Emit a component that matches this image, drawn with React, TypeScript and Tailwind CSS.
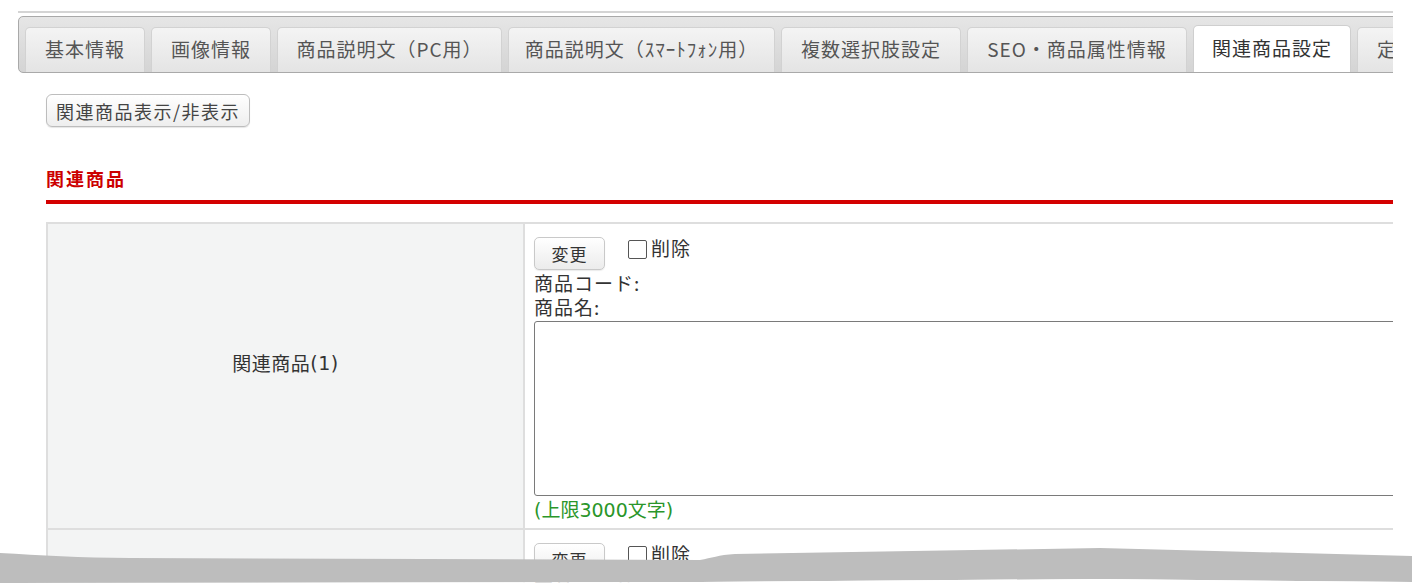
import React from "react";

const tabs: { label: string; w: string; active?: boolean }[] = [
  { label: "基本情報", w: "w-[120px]" },
  { label: "画像情報", w: "w-[120px]" },
  { label: "商品説明文（PC用）", w: "w-[225px]" },
  { label: "商品説明文（ｽﾏｰﾄﾌｫﾝ用）", w: "w-[267px]" },
  { label: "複数選択肢設定", w: "w-[180px]" },
  { label: "SEO・商品属性情報", w: "w-[220px]" },
  { label: "関連商品設定", w: "w-[158px]", active: true },
  { label: "定期購入設定", w: "w-[160px]" },
];

function Row({ n }: { n: number }) {
  return (
    <div className="flex border-b-2 border-[#dedede]">
      <div className="w-[477px] shrink-0 bg-[#f3f4f4] border-r-2 border-[#dedede] flex items-center justify-center pb-[26px] text-[19px] text-[#333] leading-[24px] font-['DejaVu_Sans','Noto_Sans_CJK_JP',sans-serif] tracking-[0.5px]">
        <span className="font-['Noto_Sans_CJK_JP',sans-serif] tracking-[0.5px]">関連商品</span>({n})
      </div>
      <div className="flex-1 pl-[9px] pt-[13px] pb-[6px]">
        <div className="flex items-start">
          <button className="w-[71px] h-[33px] rounded-[5px] border border-[#c9c9c9] bg-linear-to-b from-[#ffffff] to-[#ececec] text-[17px] text-[#333] leading-none tracking-[1px] shadow-[0_1px_1px_rgba(0,0,0,0.08)]">
            変更
          </button>
          <div className="ml-[23px] flex items-center h-[22px]">
            <span className="w-[19px] h-[19px] border border-[#555] rounded-[2px] bg-white mt-[2px]" />
            <span className="ml-[4px] text-[19px] text-[#333] leading-[24px] tracking-[1px]">削除</span>
          </div>
        </div>
        <div className="text-[19px] text-[#333] leading-[24px] mt-[1px] tracking-[1px]">商品コード:</div>
        <div className="text-[19px] text-[#333] leading-[24px] tracking-[1px]">商品名:</div>
        <div className="mt-[2px] w-[1000px] h-[175px] border border-[#7a7a7a] rounded-[3px] bg-white" />
        <div className="mt-[1px] text-[19px] text-[#2a962a] leading-[24px] font-['DejaVu_Sans','Noto_Sans_CJK_JP',sans-serif]">
          (<span className="font-['Noto_Sans_CJK_JP',sans-serif]">上限</span>3000<span className="font-['Noto_Sans_CJK_JP',sans-serif]">文字</span>)
        </div>
      </div>
    </div>
  );
}

export default function App() {
  return (
    <div className="relative w-[1412px] h-[585px] overflow-hidden bg-white font-['Noto_Sans_CJK_JP','Noto_Sans',sans-serif]">
      <div className="w-[1393px] h-[585px] overflow-hidden">
        {/* top rule */}
        <div className="ml-[18px] mt-[11px] h-[2px] bg-[#d4d4d4]" />
        {/* tab bar */}
        <div className="ml-[18px] mt-[3px] w-[1500px] h-[57px] border border-[#a9a9a9] rounded-[5px] bg-linear-to-b from-[#e6e6e6] to-[#d4d4d4] pl-[6px] pt-[10px] flex gap-[6px] items-end">
          {tabs.map((t) => (
            <div
              key={t.label}
              className={
                t.active
                  ? `${t.w} shrink-0 h-[47px] rounded-t-[5px] border border-b-0 border-[#cfcfcf] bg-white flex items-center justify-center pb-[4px] text-[19px] tracking-[1px] text-[#333] leading-none`
                  : `${t.w} shrink-0 h-[45px] rounded-t-[5px] border border-b-0 border-[#d2d2d2] bg-linear-to-b from-[#f4f4f4] to-[#e4e4e4] flex items-center justify-center pb-[4px] text-[19px] tracking-[1px] text-[#555] leading-none`
              }
            >
              {t.label}
            </div>
          ))}
        </div>

        <div className="ml-[46px]">
          <button className="mt-[21px] h-[33px] w-[204px] rounded-[6px] border border-[#bdbdbd] bg-linear-to-b from-[#ffffff] to-[#eeeeee] text-[18px] tracking-[1.5px] text-[#444] leading-none shadow-[0_1px_1px_rgba(0,0,0,0.1)]">
            関連商品表示/非表示
          </button>

          <div className="mt-[39px] text-[18px] font-bold tracking-[2px] text-[#cc0000] leading-[24px]">関連商品</div>
          <div className="mt-[10px] h-[4px] bg-[#d40000]" />

          <div className="mt-[18px] w-[1500px] border-t-2 border-l-2 border-[#dedede]">
            <Row n={1} />
            <Row n={2} />
          </div>
        </div>
      </div>

      {/* torn-edge band */}
      <svg className="absolute left-0 top-[540px]" width="1412" height="45" viewBox="0 0 1412 45">
        <path
          d="M0,13 C40,15 80,18 130,18 L700,20 C712,18 718,15 735,14 L1100,8 L1412,16 L1412,42 L1100,39 L700,42 L0,43 Z"
          fill="#bdbdbd"
        />
        <path d="M0,43 L700,42 L1100,39 L1412,42 L1412,45 L0,45 Z" fill="#ffffff" />
      </svg>
    </div>
  );
}
